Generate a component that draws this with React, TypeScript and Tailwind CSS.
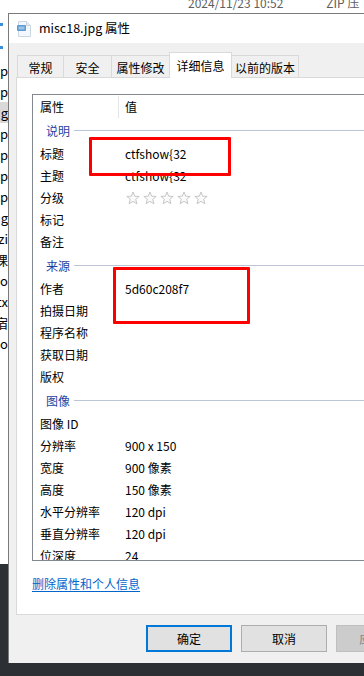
import React from "react";

const font = "font-['Noto_Sans_CJK_SC','Noto_Sans',sans-serif]";

function Star() {
  return (
    <svg width="14" height="14" viewBox="0 0 14 14">
      <path
        d="M7 1 L8.7 5.2 L13.2 5.4 L9.7 8.3 L10.9 12.8 L7 10.3 L3.1 12.8 L4.3 8.3 L0.8 5.4 L5.3 5.2 Z"
        fill="#fafafa"
        stroke="#c6c6c6"
        strokeWidth="1"
        strokeLinejoin="round"
      />
    </svg>
  );
}

function FileIcon() {
  return (
    <svg width="14" height="16" viewBox="0 0 14 16">
      <path d="M1.5 0.5 H9.5 L13.5 4.5 V15.5 H1.5 Z" fill="#f4f8fc" stroke="#c9d6e3" />
      <path d="M9.5 0.5 V4.5 H13.5" fill="#e2eaf2" stroke="#c9d6e3" />
      <rect x="0" y="4" width="9" height="6" rx="1" fill="#5b9bd5" />
      <rect x="1.5" y="5.5" width="6" height="3" fill="#9cc3e6" />
    </svg>
  );
}

function Section({ title }: { title: string }) {
  return (
    <div className="flex items-center h-[25px] pl-[13px]">
      <span className="text-[#1f3f9f]">{title}</span>
      <div className="flex-1 h-px bg-[#bcc4d8] ml-[4px]" />
    </div>
  );
}

function Row({ label, value }: { label: string; value?: React.ReactNode }) {
  return (
    <div className="flex items-center h-[22px]">
      <div className="w-[92px] pl-[7px] shrink-0">{label}</div>
      <div className="flex-1">{value}</div>
    </div>
  );
}

const explorerRows = [
  { t: "p", sel: false },
  { t: "p", sel: false },
  { t: "g", sel: true },
  { t: "p", sel: false },
  { t: "p", sel: false },
  { t: "p", sel: false },
  { t: "p", sel: false },
  { t: "ng", sel: false },
  { t: "zi", sel: false },
  { t: "课", sel: false },
  { t: "uo", sel: false },
  { t: "tx", sel: false },
  { t: "宿", sel: false },
  { t: "o", sel: false },
];

const tabs = [
  { name: "常规", w: "w-[47px]" },
  { name: "安全", w: "w-[49px]" },
  { name: "属性修改", w: "w-[59px]" },
  { name: "详细信息", w: "w-[63px]", active: true },
  { name: "以前的版本", w: "w-[68px]" },
];

export default function App() {
  return (
    <div className={`relative w-[364px] h-[676px] overflow-hidden bg-[#2c2f34] text-[12px] text-black ${font}`}>
      {/* explorer behind */}
      <div className="h-[13px] bg-white overflow-hidden flex text-[#5e5e5e] leading-[12px]">
        <span className="ml-[188px] -mt-[3px]">2024/11/23 10:52</span>
        <span className="ml-[43px] -mt-[3px]">ZIP 压</span>
      </div>

      <div className="flex h-[650px]">
        <div className="w-[8px] shrink-0 flex flex-col">
          <div className="h-[551px] bg-white overflow-hidden flex flex-col">
            <div className="h-[10px]" />
            <div className="w-[3px] h-[3px] bg-[#3c8fe0] ml-0" />
            <div className="h-[20px]" />
            <div className="w-[3px] h-[3px] bg-[#3c8fe0]" />
            <div className="h-[11px]" />
            {explorerRows.map((r, i) => (
              <div
                key={i}
                className={`h-[21px] flex items-center justify-end overflow-hidden whitespace-nowrap text-[13px] ${r.sel ? "bg-[#d9d9d9]" : ""}`}
              >
                {r.t}
              </div>
            ))}
          </div>
        </div>

        {/* properties dialog */}
        <div className="w-[440px] shrink-0 border-l border-t border-[#7b7b7b] bg-[#f0f0f0] flex flex-col">
          <div className="h-[29px] bg-white flex items-center pl-[8px]">
            <FileIcon />
            <span className="ml-[8px] text-[12.5px]">misc18.jpg 属性</span>
          </div>

          <div className="pl-[7px] pt-[9px] flex-1 flex flex-col">
            <div className="flex items-end pl-[1px] h-[25px]">
              {tabs.map((t) =>
                t.active ? (
                  <div
                    key={t.name}
                    className={`${t.w} h-[26px] -mb-px bg-white border border-b-0 border-[#d9d9d9] -ml-px flex items-center justify-center z-10`}
                  >
                    {t.name}
                  </div>
                ) : (
                  <div
                    key={t.name}
                    className={`${t.w} h-[22px] border border-b-0 border-[#d9d9d9] -ml-px first:ml-0 flex items-center justify-center pt-[2px]`}
                  >
                    {t.name}
                  </div>
                )
              )}
            </div>

            <div className="h-[538px] bg-white border border-[#d9d9d9] pt-[16px] pl-[15px]">
              <div className="h-[467px] border border-[#828790] overflow-hidden">
                <div className="flex items-center h-[23px]">
                  <div className="w-[85px] pl-[7px] shrink-0">属性</div>
                  <div className="w-px h-[22px] bg-[#e5e5e5]" />
                  <div className="pl-[6px]">值</div>
                </div>
                <Section title="说明" />
                <Row label="标题" value="ctfshow{32" />
                <Row label="主题" value="ctfshow{32" />
                <Row
                  label="分级"
                  value={
                    <div className="flex gap-[3px] pl-[1px]">
                      <Star />
                      <Star />
                      <Star />
                      <Star />
                      <Star />
                    </div>
                  }
                />
                <Row label="标记" />
                <Row label="备注" />
                <Section title="来源" />
                <Row label="作者" value="5d60c208f7" />
                <Row label="拍摄日期" />
                <Row label="程序名称" />
                <Row label="获取日期" />
                <Row label="版权" />
                <Section title="图像" />
                <Row label="图像 ID" />
                <Row label="分辨率" value="900 x 150" />
                <Row label="宽度" value="900 像素" />
                <Row label="高度" value="150 像素" />
                <Row label="水平分辨率" value="120 dpi" />
                <Row label="垂直分辨率" value="120 dpi" />
                <Row label="位深度" value="24" />
              </div>
              <div className="mt-[14px] text-[#0066cc] underline underline-offset-2">删除属性和个人信息</div>
            </div>

            <div className="flex gap-[9px] ml-[130px] mt-[10px]">
              <div className="w-[86px] h-[27px] bg-[#e1e1e1] border-2 border-[#0078d7] flex items-center justify-center">
                确定
              </div>
              <div className="w-[86px] h-[27px] bg-[#e1e1e1] border border-[#adadad] flex items-center justify-center">
                取消
              </div>
              <div className="w-[86px] h-[27px] bg-[#cccccc] border border-[#bfbfbf] flex items-center justify-center text-[#838383]">
                应用(A)
              </div>
            </div>
          </div>
        </div>
      </div>

      {/* red highlight boxes */}
      <div className="absolute left-[89px] top-[137px] w-[142px] h-[39px] border-[3px] border-[#ff0000] rounded-[1px]" />
      <div className="absolute left-[113px] top-[267px] w-[137px] h-[57px] border-[3px] border-[#ff0000] rounded-[1px]" />
    </div>
  );
}
